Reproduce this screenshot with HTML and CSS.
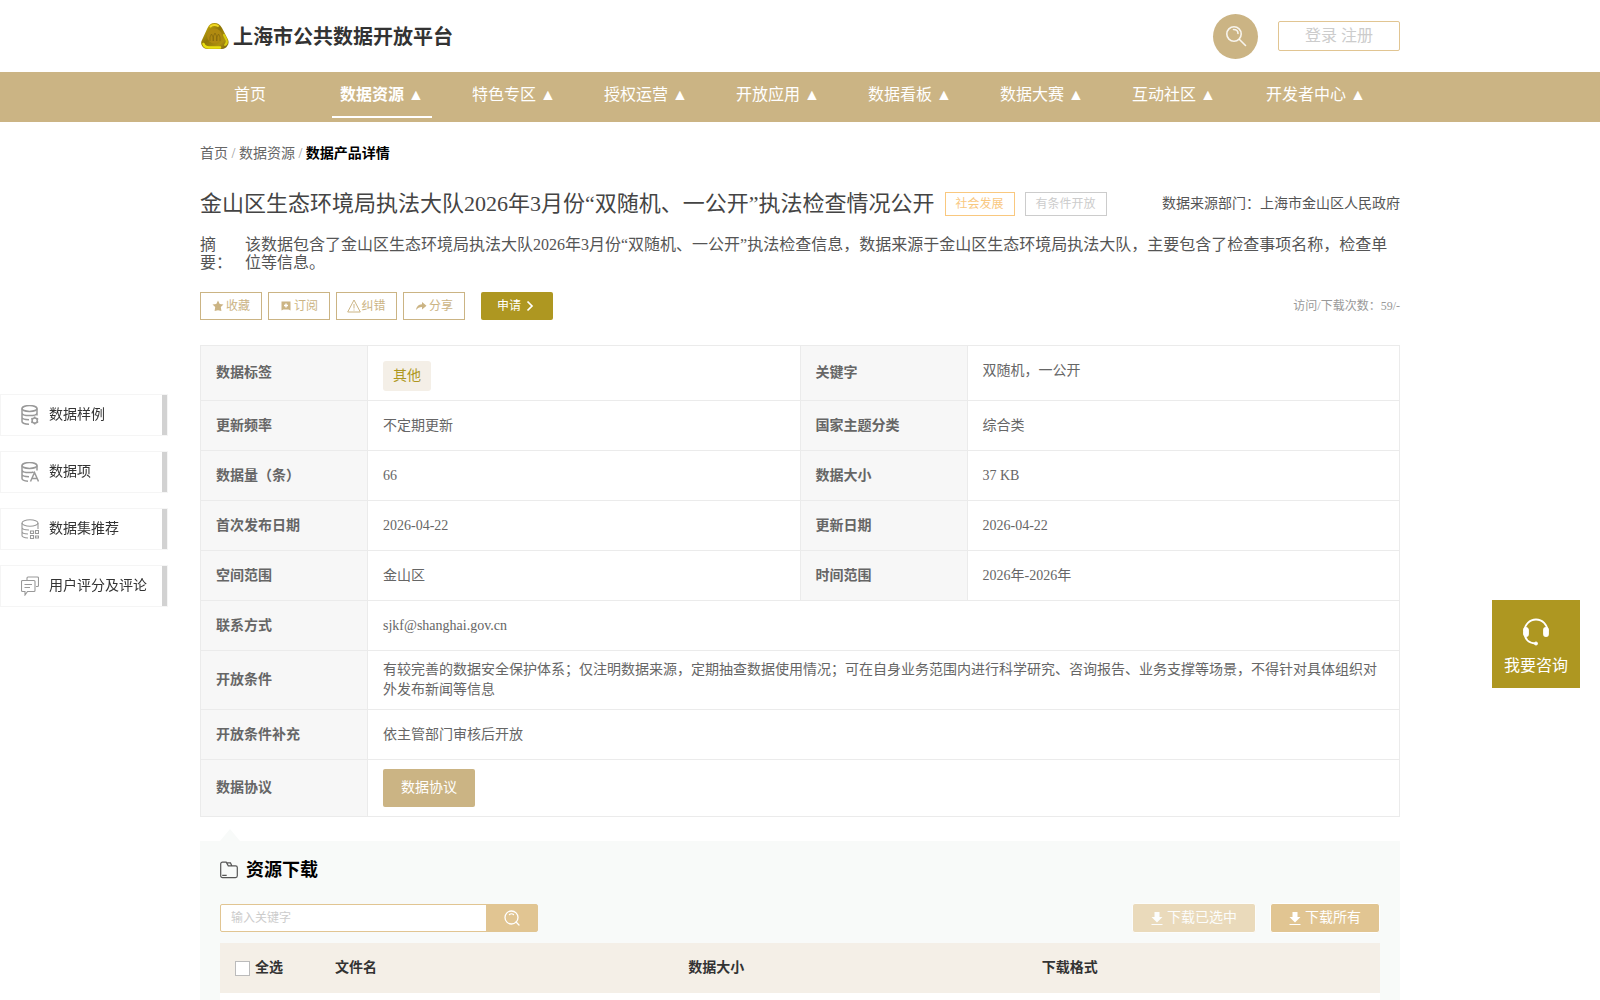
FILE: index.html
```html
<!DOCTYPE html>
<html lang="zh-CN">
<head>
<meta charset="utf-8">
<title>上海市公共数据开放平台</title>
<link rel="stylesheet" href="styles.css">
</head>
<body>
<header class="top wrap">
  <a class="brand" href="#">
    <svg width="28" height="26" viewBox="0 0 28 26">
      <defs>
        <linearGradient id="gold" x1="0" y1="0" x2="1" y2="1"><stop offset="0" stop-color="#d8bd10"/><stop offset=".45" stop-color="#8f7606"/><stop offset=".75" stop-color="#b0920f"/><stop offset="1" stop-color="#6a5510"/></linearGradient>
      </defs>
      <path d="M13.500 0c3.500 0 5.500 1.500 7.500 5l6 11.500c1 2.500.8 4.500-.8 6.500-1 1.600-2.700 3-5.200 3H6.500C4 26 2.500 25 1.500 23.500c-1.600-2-1.800-4-.5-6.500L6.500 5C8.300 1.500 10 0 13.500 0z" fill="url(#gold)"/>
      <path d="M2.500 21c1 2.700 3 3.500 5.500 3.500h11" fill="none" stroke="#e8e010" stroke-width="2.500" stroke-linecap="round"/>
      <path d="M9.500 3.500C11.500 1.500 15 1.500 17 3" fill="none" stroke="#f0d820" stroke-width="2" stroke-linecap="round"/>
      <path d="M23 12l2.500 5c.8 2 0 4-1.500 5" fill="none" stroke="#d8cc10" stroke-width="2" stroke-linecap="round"/>
      <ellipse cx="13.500" cy="13" rx="7.500" ry="7.500" fill="#b08a10"/>
      <path d="M9 18v-4l1.500-3 1.500 3v4M12.500 18v-5l1.500-3 1.500 3v5M16 18v-4l1.500-3 1.500 3v4" fill="none" stroke="#86690c" stroke-width=".8"/>
    </svg>
    <span>上海市公共数据开放平台</span>
  </a>
  <div class="account">
    <button class="round-search" aria-label="搜索">
      <svg width="22" height="22" viewBox="0 0 22 22" fill="none" stroke="#fff" stroke-opacity=".85" stroke-width="1.600"><circle cx="9" cy="9" r="7.200"/><path d="M14.500 14.500l6 6M8.500 4.500c2.500 0 4.500 1.500 4.500 4" stroke-linecap="round"/></svg>
    </button>
    <div class="login"><a href="#">登录</a> <a href="#">注册</a></div>
  </div>
</header>

<nav class="nav">
  <div class="wrap nav-list">
    <a href="#">首页</a>
    <a href="#" class="active">数据资源 <i>▲</i></a>
    <a href="#">特色专区 <i>▲</i></a>
    <a href="#">授权运营 <i>▲</i></a>
    <a href="#">开放应用 <i>▲</i></a>
    <a href="#">数据看板 <i>▲</i></a>
    <a href="#">数据大赛 <i>▲</i></a>
    <a href="#">互动社区 <i>▲</i></a>
    <a href="#" class="wide">开发者中心 <i>▲</i></a>
  </div>
</nav>

<main class="wrap">
  <div class="crumbs"><a href="#">首页</a> <span>/</span> <a href="#">数据资源</a> <span>/</span> <b>数据产品详情</b></div>

  <div class="title-row">
    <h1>金山区生态环境局执法大队2026年3月份“双随机、一公开”执法检查情况公开</h1>
    <span class="tag tag-orange">社会发展</span>
    <span class="tag">有条件开放</span>
    <span class="source">数据来源部门：上海市金山区人民政府</span>
  </div>

  <div class="abstract">
    <span class="abstract-label">摘要：</span>
    <p>该数据包含了金山区生态环境局执法大队2026年3月份“双随机、一公开”执法检查信息，数据来源于金山区生态环境局执法大队，主要包含了检查事项名称，检查单位等信息。</p>
  </div>

  <div class="actions">
    <button class="act"><svg width="12" height="12" viewBox="0 0 12 12"><path d="M6 .5l1.700 3.400 3.800.6-2.700 2.600.6 4L6 10.200l-3.400.9.6-4L.5 4.500l3.800-.6z" fill="currentColor"/></svg>收藏</button>
    <button class="act"><svg width="12" height="12" viewBox="0 0 12 12"><path d="M1.500 1.500h9v9L8.500 9.500h-5l-2 1z" fill="currentColor"/><path d="M6 3.500v4M4 5.500h4" stroke="#fff" stroke-width="1.400"/></svg>订阅</button>
    <button class="act act-tight"><svg width="14" height="14" viewBox="0 0 14 14" fill="none" stroke="currentColor"><path d="M7 1l6.300 12H.7zM7 5v4.500M7 10.500v1"/></svg>纠错</button>
    <button class="act"><svg width="12" height="12" viewBox="0 0 12 12"><path d="M7 2l4.500 3.700L7 9.500V7C4.500 7 2.500 8 1.200 10 1.200 7 3.500 4.500 7 4.300z" fill="currentColor"/></svg>分享</button>
    <button class="apply">申请<svg width="8" height="12" viewBox="0 0 8 12" fill="none" stroke="#fff" stroke-width="1.700"><path d="M1.500 1.500L6 6l-4.500 4.500"/></svg></button>
    <span class="visits">访问/下载次数：59/-</span>
  </div>

  <table class="info">
    <colgroup><col class="c-label"><col><col class="c-label"><col></colgroup>
    <tr class="r-tag"><th>数据标签</th><td><span class="chip">其他</span></td><th>关键字</th><td class="keywords">双随机，一公开</td></tr>
    <tr><th>更新频率</th><td>不定期更新</td><th>国家主题分类</th><td>综合类</td></tr>
    <tr><th>数据量（条）</th><td>66</td><th>数据大小</th><td>37 KB</td></tr>
    <tr><th>首次发布日期</th><td>2026-04-22</td><th>更新日期</th><td>2026-04-22</td></tr>
    <tr><th>空间范围</th><td>金山区</td><th>时间范围</th><td>2026年-2026年</td></tr>
    <tr><th>联系方式</th><td colspan="3">sjkf@shanghai.gov.cn</td></tr>
    <tr class="r-terms"><th>开放条件</th><td colspan="3">有较完善的数据安全保护体系；仅注明数据来源，定期抽查数据使用情况；可在自身业务范围内进行科学研究、咨询报告、业务支撑等场景，不得针对具体组织对外发布新闻等信息</td></tr>
    <tr><th>开放条件补充</th><td colspan="3">依主管部门审核后开放</td></tr>
    <tr class="r-deal"><th>数据协议</th><td colspan="3"><button class="deal">数据协议</button></td></tr>
  </table>

  <section class="res">
    <h2>
      <svg width="18" height="18" viewBox="0 0 18 18" fill="none" stroke="#555" stroke-width="1.200"><path d="M2.500 1.200h3.700l2.100 3.600h7.200c1 0 1.800.7 1.800 1.700v8.300c0 1-.8 1.800-1.800 1.800h-13c-1 0-1.800-.8-1.800-1.800V2.900c0-1 .8-1.700 1.800-1.700zM6.700 1.900h3.800l1.300 2.900M2.200 14.400h4.500"/></svg>
      资源下载
    </h2>
    <div class="tools">
      <div class="search">
        <input type="text" placeholder="输入关键字" aria-label="输入关键字">
        <button aria-label="搜索"><svg width="16" height="16" viewBox="0 0 16 16" fill="none" stroke="#fff" stroke-width="1.300"><circle cx="7.500" cy="7.500" r="6.500"/><path d="M12 12l3 3M5.500 4.500c1-.9 3-.9 4 0" stroke-linecap="round"/></svg></button>
      </div>
      <button class="dl" disabled><svg width="12" height="14" viewBox="0 0 12 14" fill="#fff"><path d="M3.500 1h5v5h3L6 11.500.5 6h3zM.5 13h11v1H.5z"/></svg>下载已选中</button>
      <button class="dl"><svg width="12" height="14" viewBox="0 0 12 14" fill="#fff"><path d="M3.500 1h5v5h3L6 11.500.5 6h3zM.5 13h11v1H.5z"/></svg>下载所有</button>
    </div>
    <table class="files">
      <thead><tr><th class="c-check"><label><input type="checkbox">全选</label></th><th>文件名</th><th>数据大小</th><th>下载格式</th></tr></thead>
      <tbody><tr><td colspan="4"></td></tr></tbody>
    </table>
  </section>
</main>

<aside class="side">
  <a href="#"><svg width="18" height="20" viewBox="0 0 18 20"><ellipse cx="8.500" cy="3.500" rx="7.500" ry="2.900"/><path d="M1 3.500v13c0 1.400 3 2.700 7 2.700M16 3.500v7M1 8c0 1.500 3 2.600 7.500 2.600S16 9.500 16 8M1 12.300c0 1.300 2.500 2.400 7 2.500"/><circle cx="13.700" cy="15.500" r="2.600"/><path d="M13.700 11.500v1.400M13.700 18.100v1.400M10.200 13.500l1.200.7M16 16.800l1.200.7M17.200 13.500l-1.200.7M11.400 16.800l-1.200.7"/></svg>数据样例</a>
  <a href="#"><svg width="18" height="20" viewBox="0 0 18 20"><ellipse cx="8.500" cy="3.500" rx="7.500" ry="2.900"/><path d="M1 3.500v13c0 1.200 2 2.400 6 2.700M16 3.500v5M1 8c0 1.500 3 2.600 7.500 2.600 1.500 0 3-.2 4-.6M1 12.300c0 1.300 2.500 2.300 7 2.400M9.500 19.500l4-9 4 9M11 16.500h5"/></svg>数据项</a>
  <a href="#"><svg class="thin" width="18" height="20" viewBox="0 0 18 20"><ellipse cx="9" cy="4" rx="8" ry="3.300"/><path d="M1 4v12.500c0 1.200 2 2.200 6 2.500M17 4v6M1 8.500c0 1.400 3 2.500 7 2.500M1 12.500c0 1.400 2.500 2.500 6 2.500M9.500 12h3v2.500h-3zM14.500 11.500h3v3h-3zM9.500 16.500h3v3h-3zM14.500 17h3v2h-3z"/></svg>数据集推荐</a>
  <a href="#"><svg class="thin" width="18" height="20" viewBox="0 0 18 20"><path d="M6 4V2c0-.6.400-1 1-1h9.500c.6 0 1 .4 1 1v7.500c0 .6-.4 1-1 1H15M1.500 4.500h11.500c.6 0 1 .4 1 1v9c0 .6-.4 1-1 1H6.500L4 19v-3.500H1.500c-.6 0-1-.4-1-1v-9c0-.6.400-1 1-1zM3.500 8.500h7.500M3.500 11.500h5.500"/></svg>用户评分及评论</a>
</aside>

<button class="consult">
  <svg width="28" height="28" viewBox="0 0 28 28" fill="none" stroke="#fff" stroke-width="1.800"><path d="M2.500 13a11.500 11.500 0 0 1 23 0M2.500 14c0 7 4 11 11 11.500"/><rect x="2" y="10" width="4" height="8" rx="2" fill="#fff"/><rect x="22" y="10" width="4" height="8" rx="2" fill="#fff"/><circle cx="14" cy="25.500" r="1.500" fill="#fff" stroke-width="1"/></svg>
  我要咨询
</button>
</body>
</html>
```
FILE: styles.css
```css
* { box-sizing: border-box; }
body {
  margin: 0;
  background: #fff;
  color: #333;
  font: 14px/20px "Liberation Serif", "Noto Sans CJK SC", serif;
  overflow-x: hidden;
}
a { color: inherit; text-decoration: none; }
button, input { font: inherit; margin: 0; }
button { border: 0; padding: 0; cursor: pointer; }
h1, h2, p { margin: 0; }
i { font-style: normal; font-weight: normal; }
svg { flex: none; }
.wrap { width: 100%; max-width: 1200px; margin: 0 auto; }

/* header */
.top { display: flex; justify-content: space-between; align-items: center; height: 72px; }
.brand { display: flex; align-items: center; gap: 4px; padding-left: 1px; font-size: 20px; line-height: 28px; font-weight: bold; }
.brand span { padding-top: 2px; }
.account { display: flex; align-items: center; gap: 20px; }
.round-search { display: flex; align-items: center; justify-content: center; width: 45px; height: 45px; border-radius: 50%; background: #cbb484; }
.login { width: 122px; height: 30px; border: 1px solid #e1c592; border-radius: 2px; color: #ccc; font-size: 16px; line-height: 28px; text-align: center; }

/* navigation */
.nav { background: #cbb484; color: #fff; }
.nav-list { display: flex; gap: 32px; height: 50px; }
.nav-list a { min-width: 100px; height: 46px; padding: 0 8px; font-size: 16px; line-height: 46px; text-align: center; white-space: nowrap; }
.nav-list .active { border-bottom: 2px solid #fff; font-weight: bold; }
.nav-list .wide { padding: 0 10px; }

/* summary */
.crumbs { padding-top: 22px; color: #666; }
.crumbs span { color: #999; }
.crumbs b { color: #000; }
.title-row { display: flex; align-items: center; gap: 10px; margin-top: 25px; }
.title-row h1 { color: #444; font-size: 22px; line-height: 30px; font-weight: normal; }
.tag { flex: none; height: 24px; padding: 0 10px; border: 1px solid #ccc; color: #ccc; font-size: 12px; line-height: 22px; }
.tag-orange { border-color: #f9c87f; color: #f9c87f; }
.source { margin-left: auto; color: #555; }
.abstract { display: flex; margin-top: 17px; color: #555; font-size: 16px; line-height: 18px; }
.abstract-label { flex: none; width: 45px; }
.actions { display: flex; align-items: center; gap: 6px; margin-top: 20px; font-size: 12px; line-height: 18px; }
.act { display: flex; align-items: center; justify-content: center; gap: 2px; width: 62px; height: 28px; border: 1px solid #cbb484; background: #fff; color: #cbb484; }
.act-tight { gap: 0; width: 61px; }
.apply { display: flex; align-items: center; gap: 5px; width: 72px; height: 28px; margin-left: 10px; padding: 0 16px; border-radius: 2px; background: #ae9721; color: #fff; }
.visits { margin-left: auto; color: #999; }

/* dataset facts */
.info { width: 100%; margin-top: 25px; border-collapse: collapse; table-layout: fixed; color: #666; }
.c-label { width: 167px; }
.info tr { height: 50px; }
.info .r-tag { height: 55px; }
.info .r-terms { height: 59px; }
.info .r-deal { height: 57px; }
.info th, .info td { padding: 0 15px; border: 1px solid #ebebeb; text-align: left; }
.info th { background: #f7f7f7; }
.info .r-tag td { padding-top: 5px; }
.info .r-tag .keywords { padding: 0 15px 5px; }
.chip { display: inline-block; padding: 5px 10px; border-radius: 3px; background: #f4efe7; color: #ae9721; vertical-align: middle; }
.deal { width: 92px; height: 38px; border-radius: 2px; background: #cbb484; color: #fff; vertical-align: middle; }

/* resources */
.res { position: relative; margin-top: 24px; padding: 15px 20px 20px; background: #f8faf9; }
.res::before { content: ""; position: absolute; left: 20px; top: -12px; border: 10px solid transparent; border-top-width: 0; border-bottom: 12px solid #f8faf9; }
.res h2 { display: flex; align-items: center; gap: 8px; color: #000; font-size: 18px; line-height: 28px; }
.tools { display: flex; margin-top: 20px; gap: 14px; }
.search { display: flex; width: 318px; height: 28px; margin-right: auto; border: 1px solid #e1c592; border-radius: 2px; background: #fff; }
.search input { flex: 1; min-width: 0; padding: 0 10px; border: 0; background: none; font-size: 12px; outline: 0; }
.search input::placeholder { color: #ccc; }
.search button { display: flex; align-items: center; justify-content: center; width: 51px; background: #e1c592; }
.dl { display: flex; align-items: center; justify-content: center; gap: 4px; height: 30px; margin: -1px 0; padding: 0 18px; border: 1px solid #fff; border-radius: 3px; background: #e1c592; color: #fff; line-height: 28px; }
.dl:disabled { opacity: .6; }
.files { width: 100%; margin-top: 11px; border-collapse: collapse; table-layout: fixed; background: #fff; }
.files th { height: 50px; padding: 0 15px; background: #f4efe7; text-align: left; }
.files td { height: 50px; }
.files .c-check { width: 100px; padding-right: 0; }
.files label { display: flex; align-items: center; gap: 5px; }
.files input { appearance: none; width: 15px; height: 15px; border: 1px solid #bbb; background: #fff; }

/* floating panels */
.side { position: fixed; left: 0; top: 394px; display: grid; gap: 15px; width: 168px; }
.side a { display: flex; align-items: center; gap: 10px; height: 42px; padding-left: 20px; border: 1px solid #f5f5f5; background: linear-gradient(#d2d2d2, #d2d2d2) right / 5px 100% no-repeat #fff; }
.side svg { fill: none; stroke: #999; stroke-width: 1.5; }
.side .thin { stroke-width: 1.1; }
.consult { position: fixed; right: 20px; top: 600px; display: flex; flex-direction: column; align-items: center; gap: 8px; width: 88px; height: 88px; padding-top: 18px; background: #ae9721; color: #fff; font-size: 16px; line-height: 24px; }
```
